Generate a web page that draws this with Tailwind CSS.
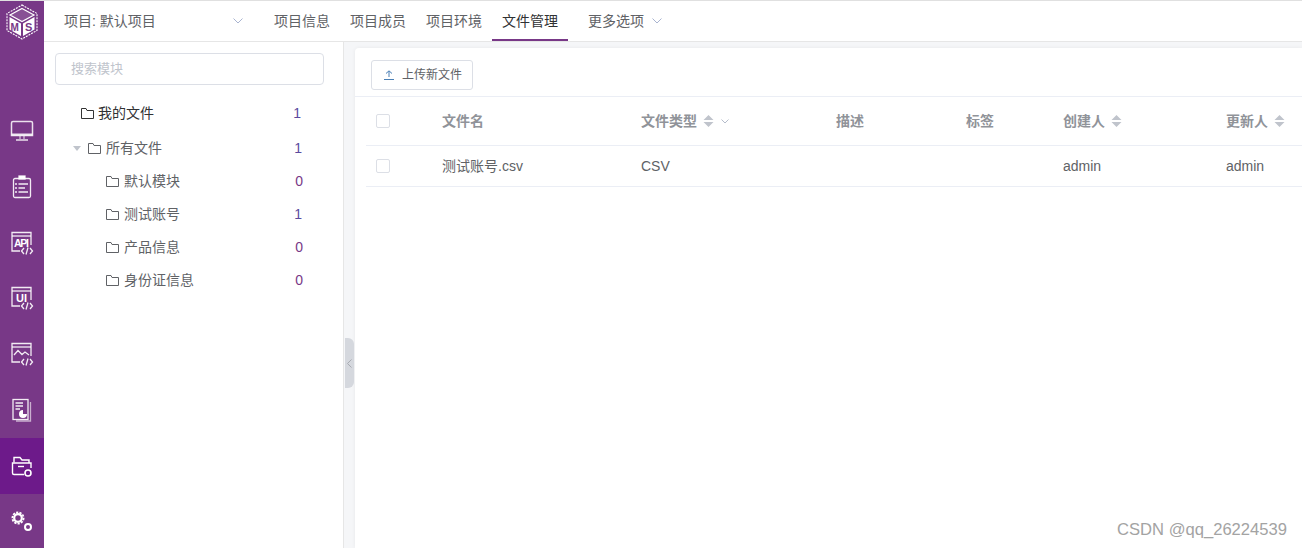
<!DOCTYPE html>
<html lang="en">
<head>
    <meta charset="UTF-8">
    <title>文件管理</title>
    <script src="https://cdn.jsdelivr.net/npm/@tailwindcss/browser@4"></script>
</head>
<body class="bg-white font-['Liberation_Sans','Noto_Sans_CJK_SC',sans-serif] text-[14px] text-[#606266]">
<div class="relative flex flex-col h-[548px] w-[1302px] overflow-hidden border-t border-[#e0e0e0]">
    <div class="flex flex-1 min-h-0">
        <!-- Left nav -->
        <aside class="w-[44px] shrink-0 bg-[#783887] flex flex-col items-center text-white">
            <div class="h-[43px] flex items-center justify-center">
                <svg width="32" height="36" viewBox="0 0 32 36" fill="none" stroke="#fff">
                    <path d="M16 1 L31 9.5 V26.5 L16 35 L1 26.5 V9.5 Z" stroke-width="1.1" stroke-dasharray="2 1"/>
                    <path d="M16 4.5 L28 11 L16 17.5 L4 11 Z" fill="#fff" fill-opacity=".12" stroke-width="1.2"/>
                    <path d="M3.5 13 L15 19.5 V32 L3.5 25.5 Z M28.5 13 L17 19.5 V32 L28.5 25.5 Z" fill="#fff" stroke="none"/>
                    <text x="4.5" y="26.5" font-size="10" font-weight="700" fill="#783887" stroke="none" font-family="Liberation Sans">M</text>
                    <text x="19" y="26.5" font-size="11" font-weight="700" fill="#783887" stroke="none" font-family="Liberation Sans">S</text>
                </svg>
            </div>
            <div class="h-[59px]"></div>
            <div class="h-[56px] w-full flex items-center justify-center">
                <svg width="24" height="22" viewBox="0 0 24 22" fill="none" stroke="#fff" stroke-opacity=".85" stroke-width="1.5">
                    <path d="M3 1.5 H21 Q22.5 1.5 22.5 3 V15.5 H1.5 V3 Q1.5 1.5 3 1.5 Z"/><path d="M1.5 14.5 H22.5" stroke-width="2"/><path d="M10 16 V19 M14 16 V19" stroke-width="1"/><path d="M6 20 H18"/>
                </svg>
            </div>
            <div class="h-[56px] w-full flex items-center justify-center">
                <svg width="20" height="24" viewBox="0 0 20 24" fill="none" stroke="#fff" stroke-opacity=".9" stroke-width="1.3">
                    <rect x="1.5" y="3.5" width="17" height="19" rx="1.5"/><rect x="7" y="1" width="6" height="3" fill="#fff"/><path d="M3 9 H5 M6.5 9 H16 M3 13 H5 M6.5 13 H13 M3 17 H5 M6.5 17 H16"/>
                </svg>
            </div>
            <div class="h-[56px] w-full flex items-center justify-center">
                <svg width="24" height="24" viewBox="0 0 24 24" fill="none" stroke="#fff" stroke-opacity=".9" stroke-width="1.3">
                    <path d="M10 20 H2 V1.5 H21 V14"/><path d="M2 5 H21"/>
                    <text x="4" y="16" font-size="10.5" font-weight="700" fill="#fff" stroke="none" font-family="Liberation Sans" textLength="15">API</text>
                    <path d="M14 17 L11.5 20 L14 23 M20 17 L22.5 20 L20 23 M18 16.5 L16 23.5"/>
                </svg>
            </div>
            <div class="h-[56px] w-full flex items-center justify-center">
                <svg width="24" height="24" viewBox="0 0 24 24" fill="none" stroke="#fff" stroke-opacity=".9" stroke-width="1.3">
                    <path d="M10 20 H2 V1.5 H21 V14"/><path d="M2 5 H21"/>
                    <text x="6" y="16" font-size="11" font-weight="700" fill="#fff" stroke="none" font-family="Liberation Sans">UI</text>
                    <path d="M14 17 L11.5 20 L14 23 M20 17 L22.5 20 L20 23 M18 16.5 L16 23.5"/>
                </svg>
            </div>
            <div class="h-[56px] w-full flex items-center justify-center">
                <svg width="24" height="24" viewBox="0 0 24 24" fill="none" stroke="#fff" stroke-opacity=".9" stroke-width="1.3">
                    <path d="M10 20 H2 V1.5 H21 V14"/><path d="M2 5 H21"/>
                    <path d="M4 13 L8 8.5 L12 12.5 L15 10 L19 13"/>
                    <path d="M14 17 L11.5 20 L14 23 M20 17 L22.5 20 L20 23 M18 16.5 L16 23.5"/>
                </svg>
            </div>
            <div class="h-[56px] w-full flex items-center justify-center">
                <svg width="20" height="24" viewBox="0 0 20 24" fill="none" stroke="#fff" stroke-opacity=".9" stroke-width="1.3">
                    <rect x="1" y="1.5" width="15" height="20"/><path d="M18.5 4 V23 H4" stroke-opacity=".6"/><path d="M3.5 5 H11 M3.5 8 H11 M3.5 11 H8"/>
                    <path d="M11 12 A4 4 0 1 0 15 16 H11 Z" fill="#fff" stroke="none"/>
                </svg>
            </div>
            <div class="h-[56px] w-full bg-[#6d1a8a] flex items-center justify-center">
                <svg width="24" height="22" viewBox="0 0 24 22" fill="none" stroke="#fff" stroke-width="1.4">
                    <path d="M14 19.5 H4 Q2.5 19.5 2.5 18 V8 H21 V13"/><path d="M4 7.5 V2.5 H10 L12 5 H19 V8"/><path d="M8 11.5 H14"/>
                    <circle cx="18" cy="18" r="3" stroke-width="1.6"/>
                </svg>
            </div>
            <div class="h-[54px] w-full flex items-center justify-center">
                <svg width="22" height="20" viewBox="0 0 22 20" fill="none" stroke="#fff">
                    <circle cx="7" cy="7" r="5.6" stroke-width="1.8" stroke-dasharray="2.2 1.2"/><circle cx="7" cy="7" r="3.8" stroke-width="2.2"/>
                    <circle cx="17" cy="16" r="3" stroke-width="2"/>
                </svg>
            </div>
        </aside>

        <div class="flex-1 min-w-0 flex flex-col">
            <!-- Top bar -->
            <header class="h-[41px] shrink-0 flex items-center border-b border-[#e6e6e6] pl-[20px]">
                <div class="w-[180px] flex items-center justify-between pr-[1px]">
                    <span class="text-[#606266]">项目: 默认项目</span>
                    <svg width="10" height="6" viewBox="0 0 10 6" fill="none" stroke="#a9b4d0"><path d="M0.5 0.5 L5 5 L9.5 0.5"/></svg>
                </div>
                <nav class="flex items-center h-full ml-[30px]">
                    <a class="w-[76px] leading-[40px] h-full">项目信息</a>
                    <a class="w-[76px] leading-[40px] h-full">项目成员</a>
                    <a class="w-[66px] leading-[40px] h-full">项目环境</a>
                    <a class="w-[76px] h-[39px] leading-[38px] text-center text-[#303133] border-b-2 border-[#783887]">文件管理</a>
                    <a class="ml-[20px] leading-[40px] h-full flex items-center gap-[8px]">更多选项
                        <svg width="10" height="6" viewBox="0 0 10 6" fill="none" stroke="#a9b4d0"><path d="M0.5 0.5 L5 5 L9.5 0.5"/></svg>
                    </a>
                </nav>
            </header>

            <div class="flex flex-1 min-h-0">
                <!-- Tree -->
                <section class="w-[300px] shrink-0 border-r border-[#e6e6e6] pt-[11px] px-[11px]">
                    <div class="w-[269px] h-[32px] border border-[#dcdfe6] rounded-[4px] pl-[15px] flex items-center text-[13px] text-[#c0c4cc]">搜索模块</div>
                    <ul class="mt-[11px] pr-[29px]">
                        <li class="h-[35px] flex items-center pl-[26px] text-[#303133]">
                            <svg class="mr-[4px]" width="13" height="11" viewBox="0 0 13 11" fill="none" stroke="#333"><path d="M0.5 10.5 V0.5 H5 L6 2.5 H12.5 V10.5 Z"/></svg>
                            <span class="flex-1">我的文件</span><span class="text-[#5b4a9e] mr-[2px]">1</span>
                        </li>
                        <li class="h-[34px] pt-[1px] flex items-center pl-[18px]">
                            <span class="mr-[7px] w-0 h-0 border-x-[4px] border-x-transparent border-t-[5px] border-t-[#c0c4cc]"></span>
                            <svg class="mr-[5px]" width="13" height="11" viewBox="0 0 13 11" fill="none" stroke="#606266"><path d="M0.5 10.5 V0.5 H5 L6 2.5 H12.5 V10.5 Z"/></svg>
                            <span class="flex-1">所有文件</span><span class="text-[#5b4a9e] mr-[1px]">1</span>
                        </li>
                        <li class="h-[33px] flex items-center pl-[51px]">
                            <svg class="mr-[5px]" width="13" height="11" viewBox="0 0 13 11" fill="none" stroke="#606266"><path d="M0.5 10.5 V0.5 H5 L6 2.5 H12.5 V10.5 Z"/></svg>
                            <span class="flex-1">默认模块</span><span class="text-[#783887]">0</span>
                        </li>
                        <li class="h-[33px] flex items-center pl-[51px]">
                            <svg class="mr-[5px]" width="13" height="11" viewBox="0 0 13 11" fill="none" stroke="#606266"><path d="M0.5 10.5 V0.5 H5 L6 2.5 H12.5 V10.5 Z"/></svg>
                            <span class="flex-1">测试账号</span><span class="text-[#5b4a9e] mr-[1px]">1</span>
                        </li>
                        <li class="h-[33px] flex items-center pl-[51px]">
                            <svg class="mr-[5px]" width="13" height="11" viewBox="0 0 13 11" fill="none" stroke="#606266"><path d="M0.5 10.5 V0.5 H5 L6 2.5 H12.5 V10.5 Z"/></svg>
                            <span class="flex-1">产品信息</span><span class="text-[#783887]">0</span>
                        </li>
                        <li class="h-[33px] flex items-center pl-[51px]">
                            <svg class="mr-[5px]" width="13" height="11" viewBox="0 0 13 11" fill="none" stroke="#606266"><path d="M0.5 10.5 V0.5 H5 L6 2.5 H12.5 V10.5 Z"/></svg>
                            <span class="flex-1">身份证信息</span><span class="text-[#783887]">0</span>
                        </li>
                    </ul>
                </section>

                <!-- Main -->
                <main class="flex-1 min-w-0 bg-[#f5f6f8] pl-[11px] pt-[6px] relative">
                    <div class="absolute left-[1px] top-[296px] w-[9px] h-[50px] bg-[#d5d8de] rounded-r-[6px] flex items-center justify-center">
                        <svg width="5" height="9" viewBox="0 0 5 9" fill="none" stroke="#a8abb2"><path d="M4.5 0.5 L0.5 4.5 L4.5 8.5"/></svg>
                    </div>
                    <div class="bg-white h-full rounded-tl-[4px] shadow-[0_0_4px_rgba(0,0,0,0.06)]">
                        <div class="h-[49px] border-b border-[#ebeef5] pt-[12px] pl-[16px]">
                            <button class="w-[102px] h-[30px] border border-[#dcdfe6] rounded-[3px] flex items-center pl-[12px] text-[12px] text-[#606266]">
                                <svg class="mr-[8px]" width="10" height="10" viewBox="0 0 10 10" fill="none" stroke="#4a7fb5"><path d="M0 9.5 H10 M5 7 V1 M2 3.5 L5 0.8 L8 3.5"/></svg>
                                上传新文件
                            </button>
                        </div>
                        <div class="pl-[11px]">
                            <div class="h-[49px] grid grid-cols-[76px_199px_195px_130px_97px_163px_80px] items-center border-b border-[#ebeef5] font-bold text-[#909399]">
                                <span class="ml-[10px] block w-[14px] h-[14px] border border-[#dcdfe6] rounded-[2px]"></span>
                                <span>文件名</span>
                                <span class="flex items-center whitespace-nowrap">文件类型
                                    <svg class="ml-[6px]" width="11" height="12" viewBox="0 0 11 12" fill="#c0c4cc"><path d="M5.5 0 L10.5 5 H0.5 Z M5.5 12 L0.5 7 H10.5 Z"/></svg>
                                    <svg class="ml-[7px]" width="8" height="5" viewBox="0 0 8 5" fill="none" stroke="#b5bccb"><path d="M0.5 0.5 L4 4 L7.5 0.5"/></svg>
                                </span>
                                <span>描述</span>
                                <span>标签</span>
                                <span class="flex items-center">创建人
                                    <svg class="ml-[6px]" width="11" height="12" viewBox="0 0 11 12" fill="#c0c4cc"><path d="M5.5 0 L10.5 5 H0.5 Z M5.5 12 L0.5 7 H10.5 Z"/></svg>
                                </span>
                                <span class="flex items-center">更新人
                                    <svg class="ml-[6px]" width="11" height="12" viewBox="0 0 11 12" fill="#c0c4cc"><path d="M5.5 0 L10.5 5 H0.5 Z M5.5 12 L0.5 7 H10.5 Z"/></svg>
                                </span>
                            </div>
                            <div class="h-[41px] grid grid-cols-[76px_199px_195px_130px_97px_163px_80px] items-center border-b border-[#ebeef5]">
                                <span class="ml-[10px] block w-[14px] h-[14px] border border-[#dcdfe6] rounded-[2px]"></span>
                                <span>测试账号.csv</span>
                                <span>CSV</span>
                                <span></span>
                                <span></span>
                                <span>admin</span>
                                <span>admin</span>
                            </div>
                        </div>
                    </div>
                </main>
            </div>
        </div>
    </div>
    <div class="absolute right-[15px] top-[520px] text-[16.6px] leading-[18px] text-[#a3a3a3]">CSDN @qq_26224539</div>
</div>
</body>
</html>
